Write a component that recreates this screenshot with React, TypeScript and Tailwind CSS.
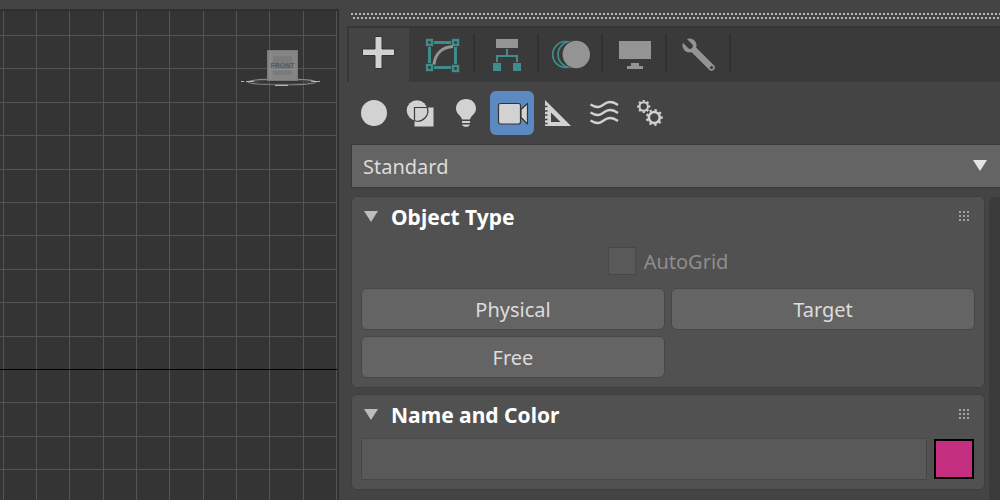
import React, { useState } from "react";

const TEAL = "#3f8c8a";
const GREY = "#949494";
const LIGHT = "#d2d2d2";
const DARK = "#3a3a3a";

const gridSteps = Array.from({ length: 80 }, (_, i) => i);

function ViewportGrid() {
  return (
    <svg className="block h-full w-full" shapeRendering="crispEdges" aria-hidden="true">
      {gridSteps.map((i) => {
        const x = Math.floor(3.2 + i * 33.32);
        return <rect key={`v${i}`} x={x} y="0" width="1" height="100%" fill="#545454" />;
      })}
      {gridSteps.map((i) => {
        const y = Math.round(24 + i * 33.4);
        return (
          <rect key={`h${i}`} x="0" y={y} width="100%" height="1" fill={i === 10 ? "#000000" : "#545454"} />
        );
      })}
    </svg>
  );
}

function ViewCube() {
  return (
    <svg width="82" height="40" viewBox="0 0 82 40" role="img" aria-label="Front view">
      <ellipse cx="42" cy="34" rx="34" ry="2.800" fill="none" stroke="#85878b" strokeWidth="1.200" />
      <ellipse cx="42" cy="34" rx="28" ry="2" fill="none" stroke="#4a4b4e" strokeWidth="1" />
      <path d="M1 33.500H4M6 33.500H14M71 33.500H80M35 37.300H48" stroke="#b4b5b9" strokeWidth="1.200" />
      <rect x="27" y="2" width="31" height="31" fill="#858585" />
      <rect x="27.500" y="2.500" width="30" height="30" fill="none" stroke="#797979" />
      <rect x="33" y="8" width="19" height="19" fill="#7a7b7d" />
      <path d="M30.500 3V32M28 21.500H57" stroke="#8f8f8f" />
      <text
        x="42.500"
        y="20"
        textAnchor="middle"
        fontSize="7"
        fontWeight="700"
        fill="#54595f"
        className="font-['Liberation_Sans',sans-serif]"
      >
        FRONT
      </text>
    </svg>
  );
}

function DragStrip() {
  return (
    <svg className="block h-[6px] w-full" shapeRendering="crispEdges" aria-hidden="true">
      <defs>
        <pattern id="strip" width="4" height="6" patternUnits="userSpaceOnUse">
          <rect x="0" y="0" width="2" height="2" fill="#b8b8b8" />
          <rect x="2" y="4" width="2" height="2" fill="#b8b8b8" />
        </pattern>
      </defs>
      <rect width="100%" height="6" fill="url(#strip)" />
    </svg>
  );
}

const tabs = [
  {
    label: "Create",
    icon: <path d="M16 1.500h7v12.500h12.500v6.500H23v13h-7v-13H3.500V14H16z" fill={LIGHT} stroke="#353535" strokeWidth="1" />,
  },
  {
    label: "Modify",
    icon: (
      <>
        <path d="M12 7.500H29M7.500 12V28M33.500 12V29M12 32.500H29" stroke={TEAL} strokeWidth="3" />
        <g fill={DARK} stroke={TEAL} strokeWidth="2.400">
          <rect x="5" y="5" width="5" height="5" />
          <rect x="31" y="5" width="5" height="5" />
          <rect x="5" y="30" width="5" height="5" />
          <rect x="31" y="31" width="5" height="5" />
        </g>
        <path d="M12 29.500C13 19 20 12 31 11.500" fill="none" stroke={GREY} strokeWidth="3" />
      </>
    ),
  },
  {
    label: "Hierarchy",
    icon: (
      <>
        <rect x="10" y="4" width="22" height="9" fill={GREY} />
        <path d="M21 14V21M11 27V21H31V27" fill="none" stroke={TEAL} strokeWidth="2" />
        <path d="M7 28h8v8H7zM27 28h8v8h-8z" fill={TEAL} />
      </>
    ),
  },
  {
    label: "Motion",
    icon: (
      <>
        <circle cx="15.700" cy="19.500" r="13" fill={DARK} stroke={TEAL} strokeWidth="1.700" />
        <circle cx="21" cy="19.500" r="13" fill={DARK} stroke={TEAL} strokeWidth="1.700" />
        <circle cx="26.300" cy="19.500" r="14.500" fill={DARK} />
        <circle cx="26.300" cy="19.500" r="13.700" fill={GREY} />
      </>
    ),
  },
  {
    label: "Display",
    icon: <path d="M5 6h32v18H5zM17 28h8v3h4v3H13v-3h4z" fill={GREY} />,
  },
  {
    label: "Utilities",
    icon: (
      <>
        <circle cx="11.500" cy="10.500" r="7" fill={GREY} />
        <path d="M12 11L33.500 32.500" stroke={GREY} strokeWidth="6.500" strokeLinecap="round" />
        <path d="M12 11L4 3" stroke={DARK} strokeWidth="5.500" strokeLinecap="round" />
        <circle cx="33.500" cy="32.500" r="1.600" fill={DARK} />
      </>
    ),
  },
];

const categories = [
  { label: "Geometry", icon: <circle cx="22" cy="22" r="13" fill={LIGHT} /> },
  {
    label: "Shapes",
    icon: (
      <>
        <circle cx="19" cy="19.500" r="10.300" fill={LIGHT} />
        <rect x="16.500" y="16.500" width="19" height="19" fill={LIGHT} />
        <path d="M16.500 30V16.500H29.500" fill="none" stroke="#3c3c3c" strokeWidth="1.200" />
        <path d="M29.300 16.500A10.300 10.300 0 0 1 16.500 29.700" fill="none" stroke="#3c3c3c" strokeWidth="1.200" />
      </>
    ),
  },
  {
    label: "Lights",
    icon: (
      <path
        d="M22 8c-5.800 0-10 4.200-10 9.600 0 5.400 5.500 7.400 6 11h8c.5-3.600 6-5.600 6-11C32 12.200 27.800 8 22 8zM18 30h8v2h-8zM18 33.500h8c-.5 1.600-2 2.300-4 2.300s-3.500-.7-4-2.300z"
        fill={LIGHT}
      />
    ),
  },
  {
    label: "Cameras",
    icon: (
      <g fill={LIGHT} stroke="#343434" strokeWidth="1.200" strokeLinejoin="round">
        <rect x="8.500" y="12.500" width="22" height="20.500" rx="2" />
        <path d="M31 18.500L37.500 12.500V33L31 26.500z" />
      </g>
    ),
  },
  {
    label: "Helpers",
    icon: (
      <>
        <path d="M9 9L35 35H9zM15 21.500V31H24.500z" fill={LIGHT} fillRule="evenodd" />
        <path d="M9 15.500h2.500M9 20h2.500M9 24h2.500M9 28.500h2.500M9 32.500h2.500" stroke="#444444" strokeWidth="1.700" />
      </>
    ),
  },
  {
    label: "Space Warps",
    icon: (
      <g fill="none" stroke={LIGHT} strokeWidth="2.400">
        <path d="M8.500 13.500C20 20.500 20 11 28 11c4 0 5.500 1.500 8 3" />
        <path d="M8.500 21.500C20 28.500 20 19 28 19c4 0 5.500 1.500 8 3" />
        <path d="M8.500 29.500C20 36.500 20 27 28 27c4 0 5.500 1.500 8 3" />
      </g>
    ),
  },
  {
    label: "Systems",
    icon: (
      <g fill="none" stroke={LIGHT}>
        <circle cx="15.700" cy="15.500" r="4.200" strokeWidth="2" />
        <circle cx="15.700" cy="15.500" r="5.700" strokeWidth="1.700" pathLength="80" strokeDasharray="5 5" strokeDashoffset="2.500" />
        <circle cx="26.300" cy="26.500" r="5.500" strokeWidth="2.600" />
        <circle cx="26.300" cy="26.500" r="7.500" strokeWidth="1.900" pathLength="90" strokeDasharray="4.500 5.500" strokeDashoffset="2" />
      </g>
    ),
  },
];

interface RolloutProps {
  title: string;
  children: React.ReactNode;
}

function Rollout({ title, children }: RolloutProps) {
  const [open, setOpen] = useState(true);

  return (
    <section className="rounded-md border border-[#3e3e3e] bg-[#515151] px-[9px]">
      <header className="mb-1 flex h-[39px] items-center justify-between pr-1">
        <h2>
          <button
            type="button"
            aria-expanded={open}
            onClick={() => setOpen(!open)}
            className="flex items-center gap-[13px] pl-[3px] text-[21px] leading-7 font-bold text-white"
          >
            <svg width="14" height="14" viewBox="0 0 14 14" aria-hidden="true">
              <path d="M0 1H14L7 12z" fill="#bdbdbd" />
            </svg>
            {title}
          </button>
        </h2>
        <svg width="12" height="14" viewBox="0 0 12 14" shapeRendering="crispEdges" aria-hidden="true">
          {[1, 5, 9].map((y) => (
            <path key={y} d={`M0 ${y}h2v2h-2zM4 ${y}h2v2h-2zM8 ${y}h2v2h-2z`} fill="#a3a3a3" />
          ))}
        </svg>
      </header>
      {open && <div className="pb-[9px]">{children}</div>}
    </section>
  );
}

export default function App() {
  const [tab, setTab] = useState("Create");
  const [category, setCategory] = useState("Cameras");

  return (
    <div className="flex min-h-screen bg-[#444444] font-['Noto_Sans','Open_Sans',sans-serif] text-[#dcdcdc]">
      {/* Viewport */}
      <main className="flex w-[34%] shrink-0 pt-[9px] pr-px">
        <div className="relative flex-1 border-t-2 border-r-2 border-[#2f2f2f] bg-[#343434]">
          <div className="absolute inset-0">
            <ViewportGrid />
          </div>
          <div className="absolute top-[37px] right-[15px]">
            <ViewCube />
          </div>
        </div>
      </main>

      {/* Command panel */}
      <aside className="flex min-w-0 flex-1 flex-col pl-[7px]">
        <div className="pt-[13px] pb-[7px] pl-1">
          <DragStrip />
        </div>

        <nav className="flex h-14 border-t-2 border-l-2 border-[#363636] bg-[#3a3a3a]">
          {tabs.map((t, i) => (
            <React.Fragment key={t.label}>
              <button
                type="button"
                aria-label={t.label}
                aria-pressed={tab === t.label}
                onClick={() => setTab(t.label)}
                className={`flex items-center justify-center ${i === 0 ? "mr-0.5 w-[60px]" : "w-[62px]"} ${
                  tab === t.label ? "bg-[#444444]" : ""
                }`}
              >
                <svg width="40" height="40" viewBox="0 0 40 40" aria-hidden="true">
                  {t.icon}
                </svg>
              </button>
              {i > 0 && <span className="mt-1.5 h-[38px] w-0.5 bg-[#303030]" />}
            </React.Fragment>
          ))}
        </nav>

        <div className="flex gap-0.5 px-[5px] py-[9px]">
          {categories.map((c) => (
            <button
              key={c.label}
              type="button"
              aria-label={c.label}
              aria-pressed={category === c.label}
              onClick={() => setCategory(c.label)}
              className={`size-11 rounded-md ${category === c.label ? "bg-[#5d89c1]" : ""}`}
            >
              <svg width="44" height="44" viewBox="0 0 44 44" aria-hidden="true">
                {c.icon}
              </svg>
            </button>
          ))}
        </div>

        <div className="relative ml-1">
          <select
            aria-label="Subcategory"
            className="block h-11 w-full appearance-none border border-r-0 border-[#393939] bg-[#646464] px-[11px] pt-0.5 text-xl"
          >
            <option>Standard</option>
          </select>
          <svg
            width="14"
            height="11"
            viewBox="0 0 14 11"
            className="pointer-events-none absolute top-4 right-[13px]"
            aria-hidden="true"
          >
            <path d="M0 0H14L7 11z" fill="#e4e4e4" />
          </svg>
        </div>

        <div className="flex flex-1 gap-1 pt-2 pl-1">
          <div className="flex min-w-0 flex-1 flex-col gap-1.5 pb-2.5">
            <Rollout title="Object Type">
              <div className="flex justify-center pt-[7px] pb-[13px]">
                <label className="flex h-7 items-center gap-2 text-xl leading-7 text-[#8e8e8e]">
                  <input
                    type="checkbox"
                    disabled
                    className="size-7 appearance-none border border-[#484848] bg-[#595959]"
                  />
                  <span className="pt-0.5">AutoGrid</span>
                </label>
              </div>
              <div className="grid grid-cols-2 gap-1.5">
                {["Physical", "Target", "Free"].map((name) => (
                  <button
                    key={name}
                    type="button"
                    className="h-[42px] rounded-md border border-[#474747] bg-[#646464] pt-0.5 text-xl"
                  >
                    {name}
                  </button>
                ))}
              </div>
            </Rollout>

            <Rollout title="Name and Color">
              <div className="flex items-center gap-[7px] pr-px">
                <input
                  type="text"
                  aria-label="Object name"
                  className="h-[42px] min-w-0 flex-1 border border-[#484848] bg-[#595959] px-2 text-xl outline-none"
                />
                <button
                  type="button"
                  aria-label="Object color"
                  className="size-10 border-2 border-black bg-[#c42f80]"
                />
              </div>
            </Rollout>
          </div>
          <div className="mt-px w-[11px] rounded-tl-md bg-[#3b3b3b]" />
        </div>
      </aside>
    </div>
  );
}
